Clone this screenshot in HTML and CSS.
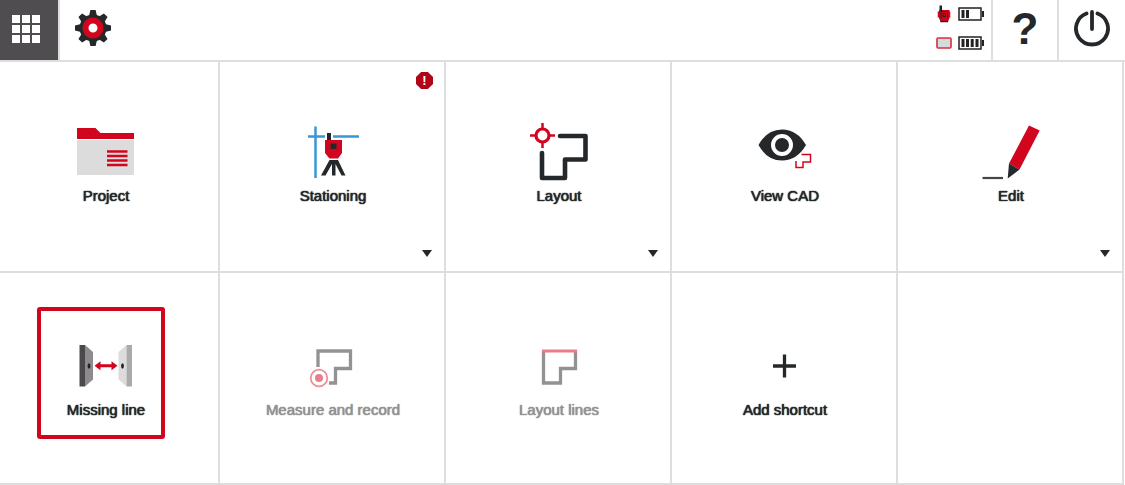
FILE: index.html
```html
<!DOCTYPE html>
<html lang="en">
<head>
<meta charset="UTF-8">
<title>Home</title>
<link rel="stylesheet" href="styles.css">
</head>
<body>

	<header class="topbar">
		<button type="button" class="bar-btn apps" aria-label="Applications">
			<svg width="28" height="28" viewBox="0 0 28 28" fill="#fff">
				<path d="M0 0h8v8H0zM10 0h8v8h-8zM20 0h8v8h-8zM0 10h8v8H0zM10 10h8v8h-8zM20 10h8v8h-8zM0 20h8v8H0zM10 20h8v8h-8zM20 20h8v8h-8z"/>
			</svg>
		</button>
		<button type="button" class="bar-btn settings" aria-label="Settings">
			<svg width="36" height="36" viewBox="-18 -18 36 36">
				<g fill="#25282a">
					<circle r="13.5"/>
					<path id="teeth" d="M-4 -12L-2.6 -18H2.6L4 -12V12L2.6 18H-2.6L-4 12zM-12 -4L-18 -2.6V2.6L-12 4H12L18 2.6V-2.6L12 -4z"/>
					<use href="#teeth" transform="rotate(45)"/>
				</g>
				<circle r="7.5" fill="#fff" stroke="#d2051e" stroke-width="6"/>
			</svg>
		</button>

		<div class="status">
			<svg width="16" height="18" viewBox="0 0 16 18">
				<path d="M3 5h10.500v8l-1.500 4H4.500L3 13z" fill="#d2051e"/>
				<path d="M2.500 6.500v6M13.500 6.500v6" stroke="#d2051e" stroke-width="1.500"/>
				<path d="M3.500 0.500h2.500v6H3.500z" fill="#222"/>
				<path d="M5 14V6.500h6.500V14M7 8.500h2.500v3H7z" fill="none" stroke="#222"/>
				<path d="M4.500 16.500h7.500" stroke="#222" stroke-width="1.500"/>
			</svg>
			<svg width="27" height="14" viewBox="0 0 27 14">
				<path d="M1 1h22v12H1z" fill="#fff" stroke="#222" stroke-width="1.5"/>
				<path d="M24 4h2v6h-2zM3.5 3h3v8h-3zM8 3h3v8H8z" fill="#222"/>
			</svg>
			<svg width="16" height="18" viewBox="0 0 16 18">
				<rect x="1" y="4" width="14" height="10" rx="1" fill="#d9d9d9" stroke="#cf3048" stroke-width="1.6"/>
			</svg>
			<svg width="27" height="14" viewBox="0 0 27 14">
				<path d="M1 1h22v12H1z" fill="#fff" stroke="#222" stroke-width="1.5"/>
				<path d="M24 4h2v6h-2zM3.5 3h3v8h-3zM8 3h3v8H8zM12.7 3h3v8h-3zM17.5 3h3v8h-3z" fill="#222"/>
			</svg>
		</div>

		<button type="button" class="bar-btn help">?</button>
		<button type="button" class="bar-btn power" aria-label="Power">
			<svg width="38" height="38" viewBox="-19 -19 38 38" fill="none" stroke="#25282a" stroke-width="3.8" stroke-linecap="round">
				<path d="M-5.5 -14.5A16 16 0 1 0 5.5 -14.5M0 -16V1"/>
			</svg>
		</button>
	</header>

	<main class="tiles">
		<button type="button" class="tile">
			<svg class="icon" viewBox="0 0 60 60">
				<path d="M1 6h18.500l5 5H58v6H1z" fill="#d2051e"/>
				<path d="M1 18h57v35H1z" fill="#dcdcdc"/>
				<path d="M31 29.500h20.500M31 34h20.500M31 38.500h20.500M31 43h20.500" stroke="#d2051e" stroke-width="2.500"/>
			</svg>
			<span class="label">Project</span>
		</button>

		<button type="button" class="tile">
			<svg class="icon" viewBox="0 0 60 60">
				<path d="M12.500 4.500V56M5 14.500h17M30 14.500h26" stroke="#3a97d3" stroke-width="2.500"/>
				<path d="M24 11h4v7h-4z" fill="#25282a"/>
				<path d="M22 18h17v13l-4 5.500h-8.500L22 31z" fill="#d2051e"/>
				<path d="M27.500 21.500h6v5.500h-6z" fill="#25282a"/>
				<path d="M26.500 38h8.500l7.500 15.500h-4l-6-11.500v11.500h-3.500V42l-6.500 11.500H18z" fill="#25282a"/>
			</svg>
			<span class="label">Stationing</span>
			<span class="alert">!</span>
			<span class="caret"></span>
		</button>

		<button type="button" class="tile">
			<svg class="icon" viewBox="0 0 60 60" fill="none">
				<path d="M31 14h25.500v23.500H36V56H13V31" stroke="#25282a" stroke-width="4.600" stroke-linecap="round" stroke-linejoin="round"/>
				<g stroke="#d2051e">
					<circle cx="13.500" cy="13.500" r="6.500" stroke-width="3.200"/>
					<path d="M13.500 1v5M13.500 21v5M1 13.500h5M21 13.500h5" stroke-width="2.500"/>
				</g>
			</svg>
			<span class="label">Layout</span>
			<span class="caret"></span>
		</button>

		<button type="button" class="tile">
			<svg class="icon" viewBox="0 0 60 60">
				<path d="M3.500 23Q12 7.500 27 7.500T51 23Q42 38.500 27 38.500T3.500 23z" fill="#25282a"/>
				<circle cx="27" cy="23" r="9" fill="#25282a" stroke="#fff" stroke-width="4"/>
				<path d="M46.500 32.500h9V40h-7.500v5.500h-7V39" fill="none" stroke="#d2051e" stroke-width="1.500"/>
			</svg>
			<span class="label">View CAD</span>
		</button>

		<button type="button" class="tile">
			<svg class="icon" viewBox="0 0 60 60">
				<path d="M48 3.500l10.700 5L38.500 47.500l-10.500-6z" fill="#d2051e"/>
				<path d="M28 41.500l10.500 6L26.700 56.500z" fill="#25282a"/>
				<path d="M1.500 56H22" stroke="#444" stroke-width="2.200"/>
			</svg>
			<span class="label">Edit</span>
			<span class="caret"></span>
		</button>

		<button type="button" class="tile selected">
			<svg class="icon" viewBox="0 0 60 60">
				<path d="M3.500 9h5.500v41.500H3.500z" fill="#4b494c"/>
				<path d="M9 9l8 7v27.500l-8 7z" fill="#8d8b8e"/>
				<path d="M50.500 9l-8 7v27.500l8 7z" fill="#dcdcdc"/>
				<path d="M50.500 9H56v41.500h-5.500z" fill="#aaa"/>
				<ellipse cx="13" cy="30" rx="1.400" ry="2.700" fill="#222"/>
				<ellipse cx="46.500" cy="30" rx="1.400" ry="2.700" fill="#222"/>
				<path d="M18.500 29.800l6-4.500v3h11v-3l6 4.500-6 4.500v-3h-11v3z" fill="#d2051e"/>
			</svg>
			<span class="label">Missing line</span>
		</button>

		<button type="button" class="tile" disabled>
			<svg class="icon" viewBox="0 0 60 60" fill="none">
				<path d="M15 31V15h32.500v17.500H32.500V47H26" stroke="#929292" stroke-width="3.300"/>
				<circle cx="16" cy="42" r="8.300" stroke="#ee8e9b" stroke-width="1.800"/>
				<circle cx="16" cy="42" r="4" fill="#e77f8d"/>
			</svg>
			<span class="label">Measure and record</span>
		</button>

		<button type="button" class="tile" disabled>
			<svg class="icon" viewBox="0 0 60 60" fill="none">
				<path d="M14.500 14v33h17V32.500H46.500V14" stroke="#929292" stroke-width="3.300"/>
				<path d="M13 15h35" stroke="#e97d8c" stroke-width="3"/>
			</svg>
			<span class="label">Layout lines</span>
		</button>

		<button type="button" class="tile">
			<svg class="icon" viewBox="0 0 60 60">
				<path d="M29.500 18.500v23M18 30h23" stroke="#25282a" stroke-width="3.300"/>
			</svg>
			<span class="label">Add shortcut</span>
		</button>

		<div class="tile"></div>
	</main>

</body>
</html>
```
FILE: styles.css
```css
* {
	box-sizing: border-box;
}

body {
	display: flex;
	flex-direction: column;
	min-height: 100vh;
	margin: 0;
	background-color: #fff;
	color: #25282a;
	font-family: "Liberation Sans", Arial, sans-serif;
}

button {
	margin: 0;
	padding: 0;
	border: none;
	background: none;
	color: inherit;
	font-family: inherit;
}

svg {
	display: block;
}

/* top bar */
.topbar {
	display: flex;
	height: 62px;
	border-bottom: 2px solid #dedede;
}

.bar-btn {
	display: flex;
	align-items: center;
	justify-content: center;
	padding-bottom: 2px;
}

.apps {
	width: 60px;
	border-right: 2px solid #dedede;
	background-color: #504d50;
	padding-right: 6px;
}

.settings {
	width: 66px;
	padding-bottom: 4px;
}

.status {
	display: grid;
	grid-template-columns: 16px 27px;
	grid-template-rows: 28px 30px;
	column-gap: 6px;
	align-items: center;
	margin-left: auto;
	padding-right: 6px;
}

.help {
	width: 66px;
	border-left: 2px solid #dedede;
	font-size: 44px;
	font-weight: bold;
	line-height: 44px;
}

.power {
	width: 68px;
	border-left: 2px solid #dedede;
	padding-bottom: 4px;
}

/* tiles */
.tiles {
	flex: 1;
	display: grid;
	grid-template-columns: 220fr repeat(4, 226fr);
	grid-template-rows: 211fr 212fr;
	padding-right: 1px;
}

.tile {
	position: relative;
	display: flex;
	flex-direction: column;
	align-items: center;
	justify-content: center;
	gap: 4px;
	padding-left: 2px;
	border-right: 2px solid #dedede;
	border-bottom: 2px solid #dedede;
}

.tile:nth-child(-n+5) {
	padding-bottom: 6px;
}

/* the first column is cut on its left side */
.tile:nth-child(5n+1) {
	padding-left: 0;
	padding-right: 6px;
}

.tile:disabled {
	color: #929292;
}

.icon {
	width: 60px;
	height: 60px;
}

.label {
	font-size: 15px;
	line-height: 20px;
	text-shadow: 0 0 1px currentColor, 0 0 1px currentColor;
}

.alert {
	position: absolute;
	top: 10px;
	right: 11px;
	width: 17px;
	height: 17px;
	background-color: #b00519;
	clip-path: polygon(30% 0, 70% 0, 100% 30%, 100% 70%, 70% 100%, 30% 100%, 0 70%, 0 30%);
	color: #fff;
	font-size: 13px;
	font-weight: bold;
	line-height: 17px;
	text-align: center;
}

.caret {
	position: absolute;
	right: 12px;
	bottom: 14px;
	border: 5px solid transparent;
	border-top: 7px solid #25282a;
	border-bottom: none;
}

.selected::after {
	content: "";
	position: absolute;
	top: 34px;
	bottom: 44px;
	left: 37px;
	right: 53px;
	border: 4px solid #d2051e;
	border-radius: 3px;
}
```
